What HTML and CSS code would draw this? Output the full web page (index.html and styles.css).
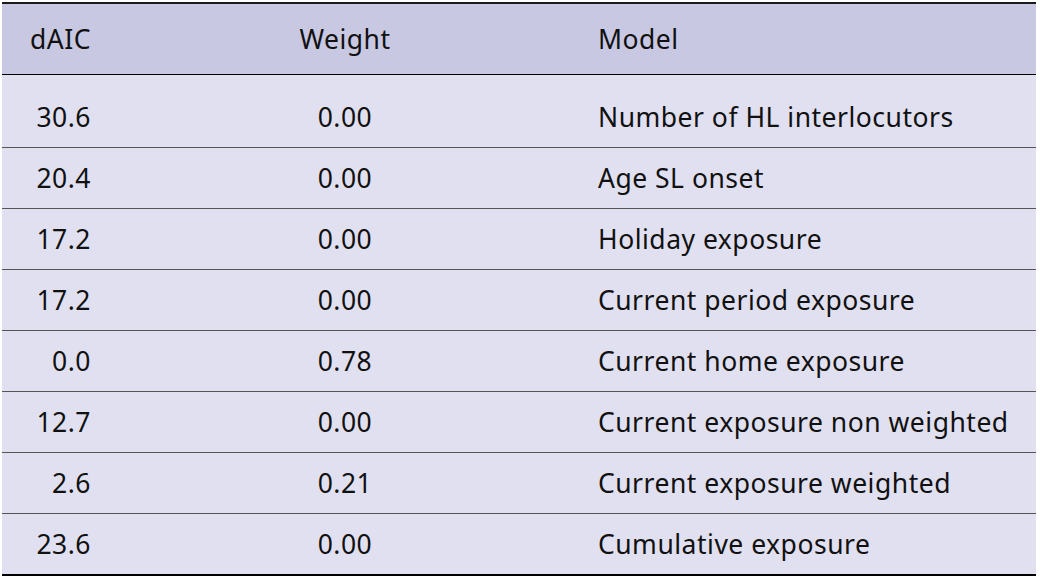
FILE: index.html
```html
<!DOCTYPE html>
<html>
<head>
<meta charset="utf-8">
<link rel="stylesheet" href="styles.css">
</head>
<body>
<table class="aic">
  <thead>
    <tr><th class="c1">dAIC</th><th class="c2">Weight</th><th class="c3">Model</th></tr>
  </thead>
  <tbody>
    <tr class="first"><td class="c1">30.6</td><td class="c2">0.00</td><td class="c3">Number of HL interlocutors</td></tr>
    <tr><td class="c1">20.4</td><td class="c2">0.00</td><td class="c3">Age SL onset</td></tr>
    <tr><td class="c1">17.2</td><td class="c2">0.00</td><td class="c3">Holiday exposure</td></tr>
    <tr><td class="c1">17.2</td><td class="c2">0.00</td><td class="c3">Current period exposure</td></tr>
    <tr><td class="c1">0.0</td><td class="c2">0.78</td><td class="c3">Current home exposure</td></tr>
    <tr><td class="c1">12.7</td><td class="c2">0.00</td><td class="c3">Current exposure non weighted</td></tr>
    <tr><td class="c1">2.6</td><td class="c2">0.21</td><td class="c3">Current exposure weighted</td></tr>
    <tr><td class="c1">23.6</td><td class="c2">0.00</td><td class="c3">Cumulative exposure</td></tr>
  </tbody>
</table>
</body>
</html>
```
FILE: styles.css
```css
html, body {
  margin: 0;
  padding: 0;
  background: #ffffff;
}
body {
  padding: 2px 6px 0 2px;
  font-family: "Noto Sans", "Open Sans", sans-serif;
  font-size: 26.5px;
  letter-spacing: 0.5px;
  color: #111;
}
.aic {
  width: 1034px;
  border-collapse: collapse;
  border-top: 2px solid #1a1a1a;
  border-bottom: 2px solid #000;
  background: #e0e0f0;
}
.aic th {
  font-weight: normal;
  background: #c8c8e2;
  height: 70px;
  padding: 0;
  border-bottom: 1px solid #000;
  vertical-align: middle;
}
.aic td {
  height: 60px;
  padding: 0;
  border-bottom: 1px solid #555;
  vertical-align: middle;
}
.aic tr.first td {
  height: 60px;
  padding-top: 12px;
}
.aic tr:last-child td {
  border-bottom: none;
}
.c1 {
  width: 89px;
  text-align: right;
  padding-right: 31px !important;
}
.c2 {
  width: 446px;
  text-align: center;
}
.c3 {
  text-align: left;
  padding-left: 30px !important;
}
```
